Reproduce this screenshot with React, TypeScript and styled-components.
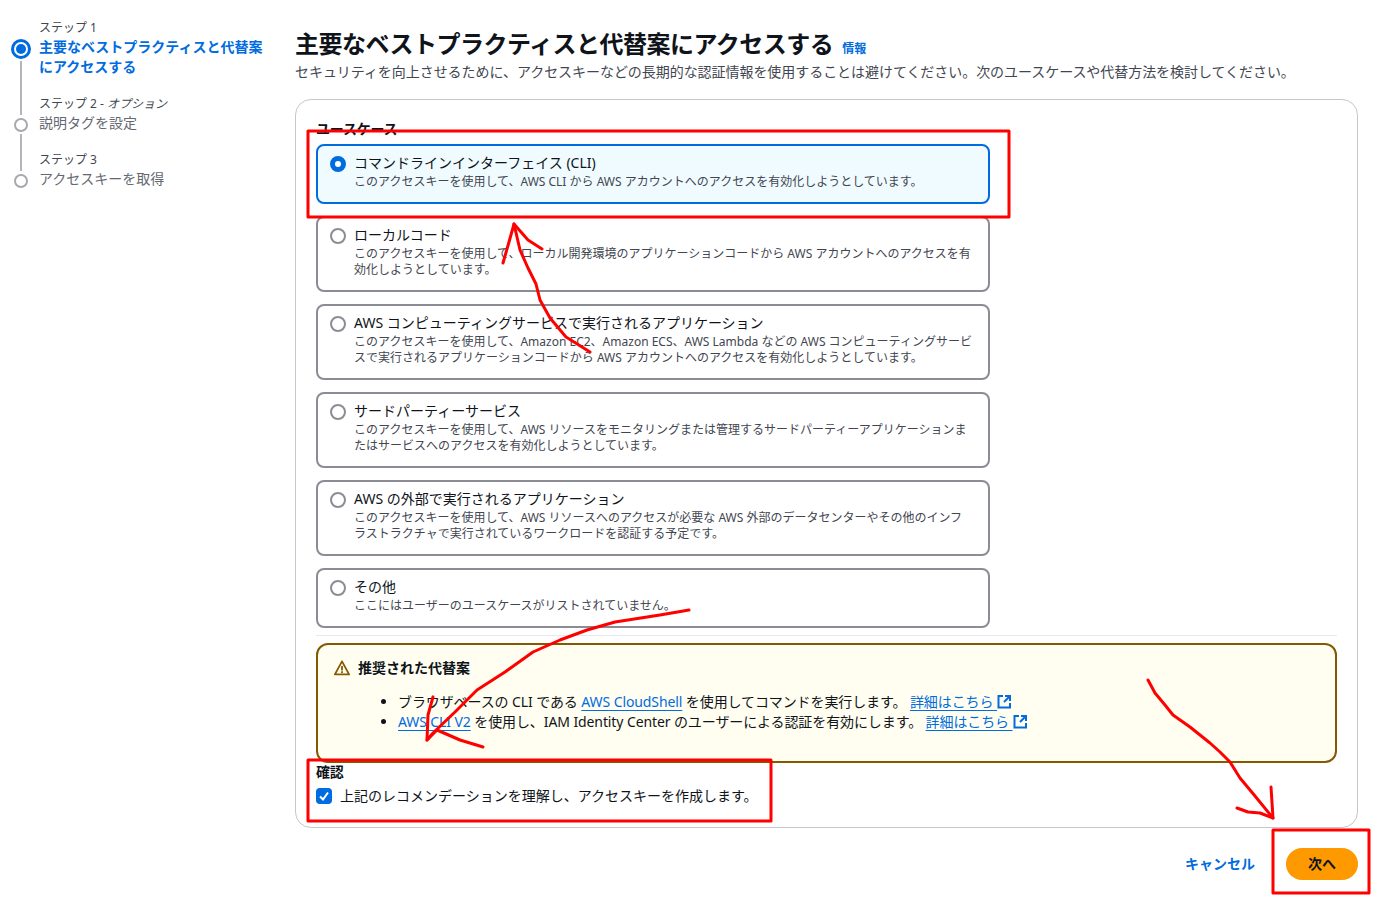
import React from 'react'
import styled, {createGlobalStyle} from 'styled-components'

const GlobalStyle = createGlobalStyle`
	html, body {
		margin: 0;
		padding: 0;
		background: #ffffff;
	}
	body {
		font-family: "Noto Sans", "Noto Sans CJK JP", sans-serif;
		font-size: 14px;
		line-height: 20px;
		color: #0f141a;
	}
`

const Page = styled.div`
	position: relative;
	display: flex;
	width: 1390px;
	height: 915px;
	overflow: hidden;
`

const Sidebar = styled.nav`
	width: 284px;
	padding: 17px 0 0 11px;
	flex-shrink: 0;
`

const Step = styled.div`
	display: grid;
	grid-template-columns: 20px 1fr;
	column-gap: 8px;
`

const RailTop = styled.div<{$line: boolean}>`
	display: flex;
	justify-content: center;
	&::before {
		content: '';
		width: 2px;
		margin-bottom: -2px;
		background: ${props => props.$line ? '#b4b4bb' : 'transparent'};
	}
`

const StepLabel = styled.div`
	padding-top: 2px;
	font-size: 12px;
	line-height: 18px;
	color: #424650;
	em {
		font-style: italic;
	}
`

const RailBottom = styled.div`
	display: flex;
	flex-direction: column;
	align-items: center;
`

const RailLine = styled.div`
	flex: 1;
	width: 2px;
	margin-top: 2px;
	background: #b4b4bb;
`

const ActiveDot = styled.div`
	box-sizing: border-box;
	width: 20px;
	height: 20px;
	margin-top: 2px;
	border: 3px solid #006ce0;
	border-radius: 50%;
	display: flex;
	align-items: center;
	justify-content: center;
	&::before {
		content: '';
		flex-shrink: 0;
		width: 10px;
		height: 10px;
		border-radius: 50%;
		background: #006ce0;
	}
`

const IdleDot = styled.div`
	box-sizing: border-box;
	width: 14px;
	height: 14px;
	margin-top: 5px;
	border: 2px solid #a8a8b0;
	border-radius: 50%;
`

const StepTitle = styled.div<{$active?: boolean}>`
	padding-bottom: 16px;
	font-size: 14px;
	line-height: 20px;
	font-weight: ${props => props.$active ? 700 : 400};
	color: ${props => props.$active ? '#006ce0' : '#656871'};
`

const Main = styled.main`
	width: 1063px;
	flex-shrink: 0;
	display: flex;
	flex-direction: column;
`

const TitleRow = styled.div`
	display: flex;
	align-items: baseline;
	gap: 9px;
	margin-top: 28px;
`

const Title = styled.h1`
	margin: 0;
	font-size: 24px;
	line-height: 32px;
	font-weight: 700;
	letter-spacing: -0.5px;
`

const InfoLink = styled.a`
	font-size: 12px;
	font-weight: 700;
	color: #006ce0;
`

const Subtitle = styled.p`
	margin: 0 0 15px;
	font-size: 14px;
	line-height: 24px;
	letter-spacing: -0.05px;
	color: #424650;
	white-space: nowrap;
`

const Card = styled.section`
	box-sizing: border-box;
	height: 729px;
	padding: 19px 20px 0;
	border: 1px solid #c6c6cd;
	border-radius: 16px;
`

const FieldLabel = styled.div<{$before?: number; $gap: number}>`
	margin-top: ${props => props.$before ?? 0}px;
	margin-bottom: ${props => props.$gap}px;
	font-size: 14px;
	line-height: 20px;
	font-weight: 700;
	letter-spacing: -0.2px;
`

const Options = styled.div`
	display: flex;
	flex-direction: column;
	gap: 12px;
	width: 674px;
`

const Option = styled.div<{$selected?: boolean}>`
	box-sizing: border-box;
	display: flex;
	gap: 8px;
	padding: 7px 12px 12px;
	border: 2px solid ${props => props.$selected ? '#006ce0' : '#8c8c94'};
	border-radius: 8px;
	background: ${props => props.$selected ? '#f0fbff' : '#ffffff'};
`

const Radio = styled.span<{$selected?: boolean}>`
	box-sizing: border-box;
	flex-shrink: 0;
	width: 16px;
	height: 16px;
	margin-top: 3px;
	border-radius: 50%;
	border: ${props => props.$selected ? '5px solid #006ce0' : '2px solid #8c8c94'};
	background: #ffffff;
`

const OptionTitle = styled.div`
	margin-bottom: 1px;
	font-size: 14px;
	line-height: 20px;
	color: #0f141a;
`

const OptionText = styled.div`
	font-size: 12px;
	line-height: 16px;
	color: #424650;
	white-space: nowrap;
`

const Divider = styled.hr`
	margin: 7px 0 7px;
	border: 0;
	border-top: 1px solid #e8e8ee;
`

const Alert = styled.div`
	box-sizing: border-box;
	height: 120px;
	padding: 13px 16px;
	border: 2px solid #855900;
	border-radius: 12px;
	background: #fffef0;
`

const AlertHead = styled.div`
	display: flex;
	align-items: center;
	gap: 8px;
	font-weight: 700;
	line-height: 20px;
`

const AlertList = styled.ul`
	margin: 14px 0 0;
	padding-left: 64px;
	list-style: disc;
	line-height: 20px;
	letter-spacing: -0.1px;
`

const TextLink = styled.a`
	color: #006ce0;
	text-decoration: underline;
	text-underline-offset: 3px;
`

const ExternalIcon = styled.svg`
	display: inline-block;
	width: 15px;
	height: 15px;
	vertical-align: -2px;
`

const CheckRow = styled.div`
	display: flex;
	align-items: center;
	gap: 8px;
	font-size: 14px;
	line-height: 20px;
`

const CheckBox = styled.span`
	display: flex;
	align-items: center;
	justify-content: center;
	width: 16px;
	height: 16px;
	border-radius: 4px;
	background: #006ce0;
`

const Footer = styled.div`
	display: flex;
	justify-content: flex-end;
	align-items: center;
	gap: 31px;
	margin-top: 20px;
`

const CancelLink = styled.a`
	font-weight: 700;
	color: #006ce0;
`

const PrimaryButton = styled.button`
	width: 72px;
	height: 32px;
	padding: 0;
	border: 0;
	border-radius: 16px;
	background: #ff9900;
	font: inherit;
	font-weight: 700;
	color: #0f141a;
`

const Markup = styled.svg`
	position: absolute;
	top: 0;
	left: 0;
	pointer-events: none;
`

const External = () => (
	<ExternalIcon viewBox="0 0 15 15" fill="none" stroke="#006ce0" strokeWidth="2">
		<path d="M6 2H1.5v11.5H13V9" />
		<path d="M8 2h5v5M13 2L7 8" />
	</ExternalIcon>
)

const options = [
	{
		title: 'コマンドラインインターフェイス (CLI)',
		lines: ['このアクセスキーを使用して、AWS CLI から AWS アカウントへのアクセスを有効化しようとしています。'],
		selected: true,
	},
	{
		title: 'ローカルコード',
		lines: ['このアクセスキーを使用して、ローカル開発環境のアプリケーションコードから AWS アカウントへのアクセスを有', '効化しようとしています。'],
	},
	{
		title: 'AWS コンピューティングサービスで実行されるアプリケーション',
		lines: ['このアクセスキーを使用して、Amazon EC2、Amazon ECS、AWS Lambda などの AWS コンピューティングサービ', 'スで実行されるアプリケーションコードから AWS アカウントへのアクセスを有効化しようとしています。'],
	},
	{
		title: 'サードパーティーサービス',
		lines: ['このアクセスキーを使用して、AWS リソースをモニタリングまたは管理するサードパーティーアプリケーションま', 'たはサービスへのアクセスを有効化しようとしています。'],
	},
	{
		title: 'AWS の外部で実行されるアプリケーション',
		lines: ['このアクセスキーを使用して、AWS リソースへのアクセスが必要な AWS 外部のデータセンターやその他のインフ', 'ラストラクチャで実行されているワークロードを認証する予定です。'],
	},
	{
		title: 'その他',
		lines: ['ここにはユーザーのユースケースがリストされていません。'],
	},
]

export default function App() {
	return (
		<Page>
			<GlobalStyle />
			<Sidebar>
				<Step>
					<RailTop $line={false} />
					<StepLabel>ステップ 1</StepLabel>
					<RailBottom>
						<ActiveDot />
						<RailLine />
					</RailBottom>
					<StepTitle $active>主要なベストプラクティスと代替案<br />にアクセスする</StepTitle>
				</Step>
				<Step>
					<RailTop $line />
					<StepLabel>ステップ 2 - <em>オプション</em></StepLabel>
					<RailBottom>
						<IdleDot />
						<RailLine />
					</RailBottom>
					<StepTitle>説明タグを設定</StepTitle>
				</Step>
				<Step>
					<RailTop $line />
					<StepLabel>ステップ 3</StepLabel>
					<RailBottom>
						<IdleDot />
					</RailBottom>
					<StepTitle>アクセスキーを取得</StepTitle>
				</Step>
			</Sidebar>
			<Main>
				<TitleRow>
					<Title>主要なベストプラクティスと代替案にアクセスする</Title>
					<InfoLink>情報</InfoLink>
				</TitleRow>
				<Subtitle>セキュリティを向上させるために、アクセスキーなどの長期的な認証情報を使用することは避けてください。次のユースケースや代替方法を検討してください。</Subtitle>
				<Card>
					<FieldLabel $gap={5}>ユースケース</FieldLabel>
					<Options>
						{options.map(option => (
							<Option key={option.title} $selected={option.selected}>
								<Radio $selected={option.selected} />
								<div>
									<OptionTitle>{option.title}</OptionTitle>
									<OptionText>
										{option.lines.map(line => <div key={line}>{line}</div>)}
									</OptionText>
								</div>
							</Option>
						))}
					</Options>
					<Divider />
					<Alert>
						<AlertHead>
							<svg width="16" height="16" viewBox="0 0 16 16" fill="none" stroke="#855900" strokeWidth="1.8" strokeLinejoin="round">
								<path d="M8 1.4L0.9 14.4h14.2L8 1.4z" />
								<path d="M8 6v4.5M8 11.3v1.6" />
							</svg>
							推奨された代替案
						</AlertHead>
						<AlertList>
							<li>ブラウザベースの CLI である <TextLink>AWS CloudShell</TextLink> を使用してコマンドを実行します。 <TextLink>詳細はこちら </TextLink><External /></li>
							<li><TextLink>AWS CLI V2</TextLink> を使用し、IAM Identity Center のユーザーによる認証を有効にします。 <TextLink>詳細はこちら </TextLink><External /></li>
						</AlertList>
					</Alert>
					<FieldLabel $before={-1} $gap={4}>確認</FieldLabel>
					<CheckRow>
						<CheckBox>
							<svg width="12" height="12" viewBox="0 0 12 12" fill="none" stroke="#ffffff" strokeWidth="2">
								<path d="M2 6.5L5 9.5L10 2.5" />
							</svg>
						</CheckBox>
						上記のレコメンデーションを理解し、アクセスキーを作成します。
					</CheckRow>
				</Card>
				<Footer>
					<CancelLink>キャンセル</CancelLink>
					<PrimaryButton>次へ</PrimaryButton>
				</Footer>
			</Main>
			<Markup width="1390" height="915" viewBox="0 0 1390 915" fill="none" stroke="#ff0000" strokeWidth="3" strokeLinejoin="round" strokeLinecap="round">
				<rect x="308" y="131" width="701" height="86" />
				<rect x="308" y="760" width="463" height="61" />
				<rect x="1273" y="830" width="96" height="63" />
				<path d="M590 352L566 337L550 318L540 300L536 284L528 268L520 250L514 224" />
				<path d="M503 263L509 242L514 224L528 240L542 249" />
				<path d="M689 610L660 615L615 622L587 630L560 640L533 652L505 672L477 690L455 712L433 733L427 740" />
				<path d="M433 697L428 715L427 740L437 730L460 740L483 747" />
				<path d="M1148 680L1155 693L1165 705L1173 715L1190 727L1210 743L1220 752L1230 762L1240 778L1255 796L1273 818" />
				<path d="M1271 787L1273 818L1260 813L1248 812L1237 808" />
			</Markup>
		</Page>
	)
}
